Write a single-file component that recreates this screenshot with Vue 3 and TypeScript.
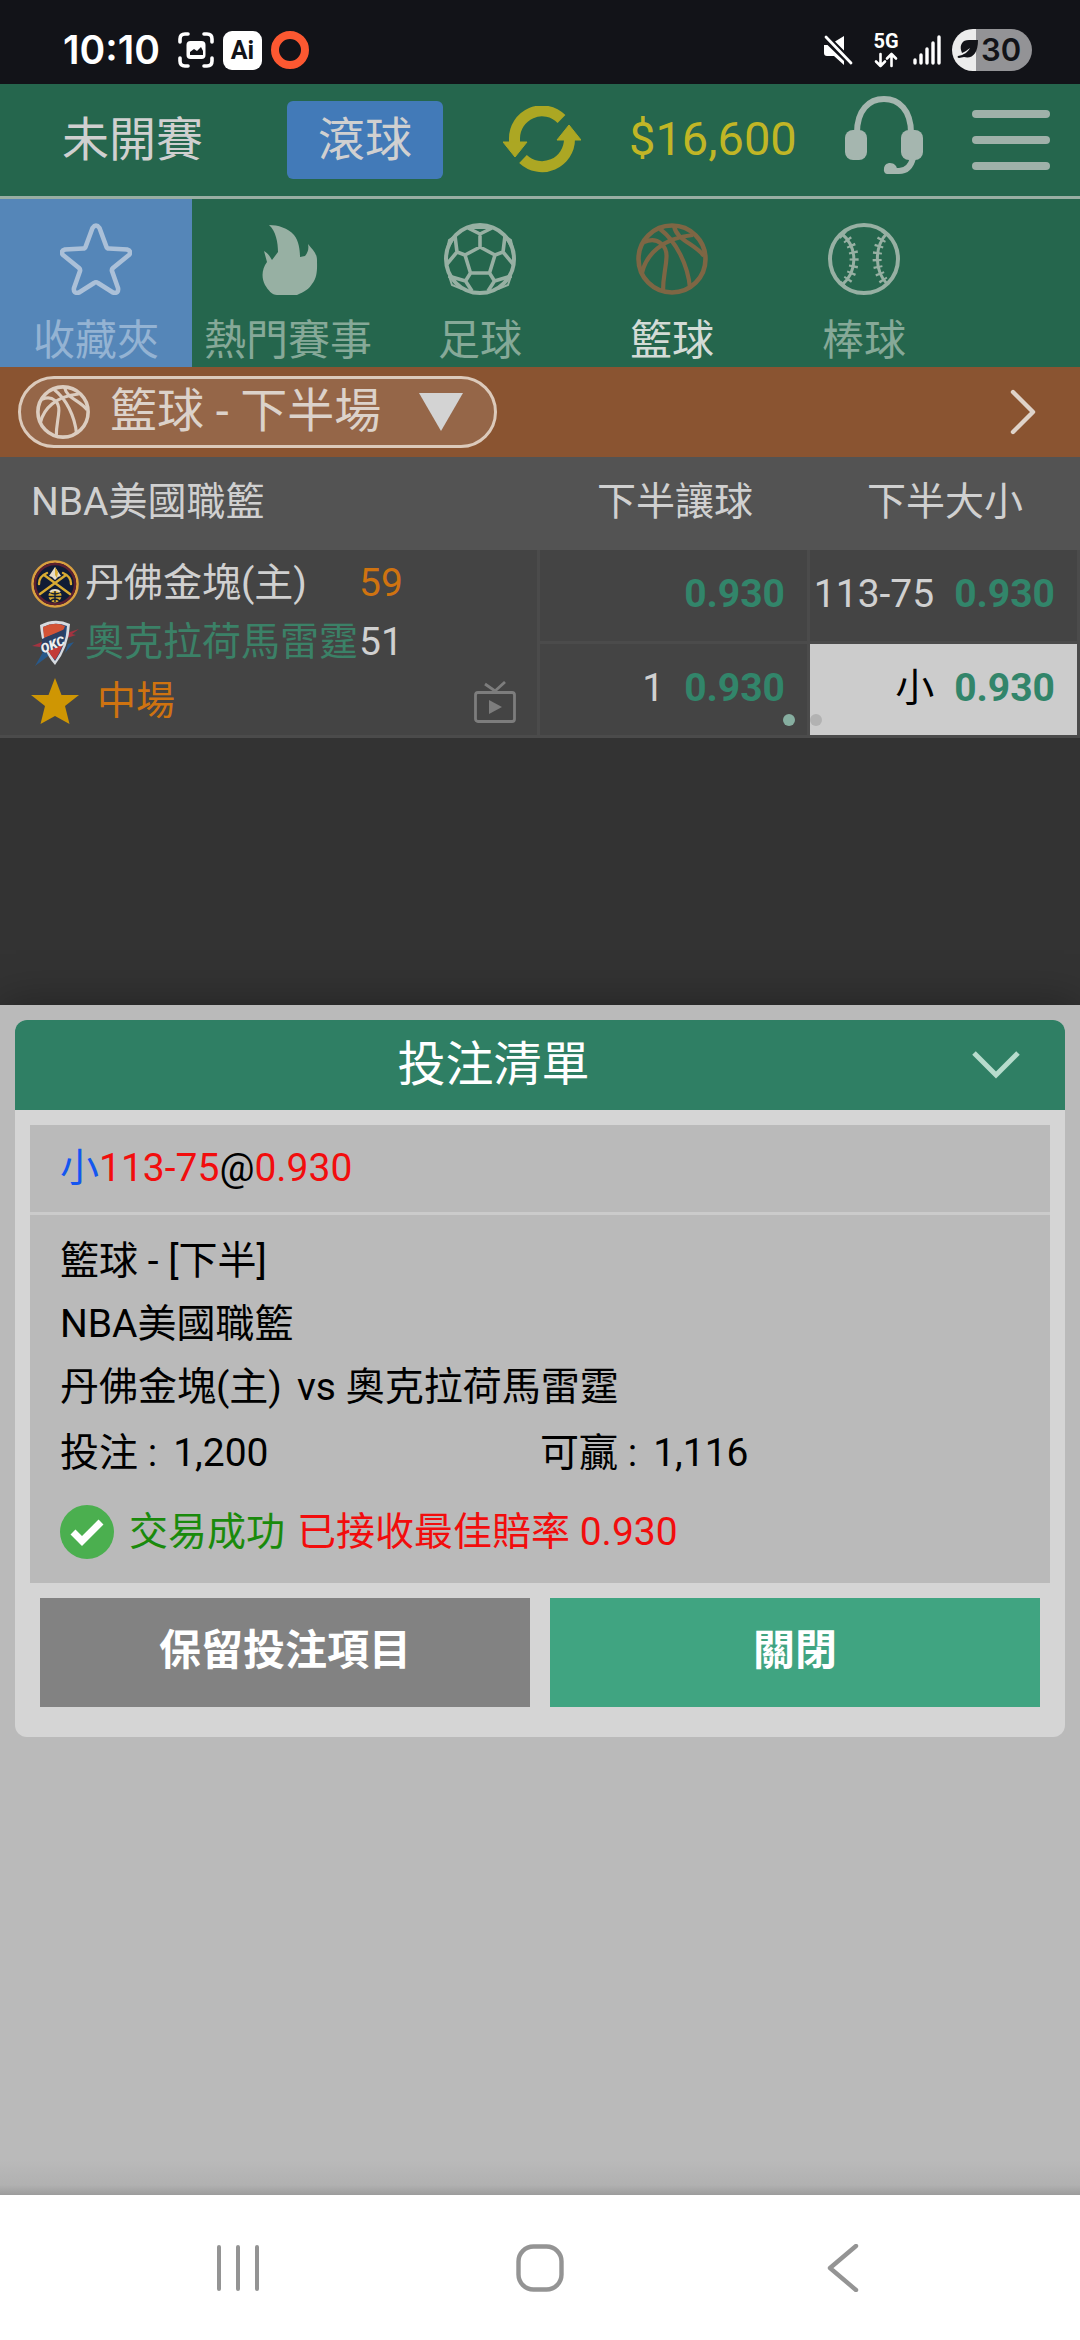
<script setup lang="ts">
import { ref } from 'vue'

interface Sport {
  id: string
  name: string
}

interface Odds {
  id: string
  line: string
  price: string
  picked?: boolean
  dot?: 'right' | 'left'
}

const sports: Sport[] = [
  { id: 'favourite', name: '收藏夾' },
  { id: 'hot', name: '熱門賽事' },
  { id: 'soccer', name: '足球' },
  { id: 'basketball', name: '籃球' },
  { id: 'baseball', name: '棒球' },
]

const homeOdds: Odds[] = [
  { id: 'h1', line: '', price: '0.930' },
  { id: 'o1', line: '113-75', price: '0.930' },
]

const awayOdds: Odds[] = [
  { id: 'h2', line: '1', price: '0.930', dot: 'right' },
  { id: 'o2', line: '小', price: '0.930', picked: true, dot: 'left' },
]

const period = ref('second')
</script>

<template>
  <div class="screen" lang="zh-Hant">
    <div class="status">
      <div class="status-side">
        <span class="clock">10:10</span>
        <svg class="shot" width="36" height="36" viewBox="0 0 36 36" fill="none">
          <path d="M2 10V7q0-5 5-5h3M26 2h3q5 0 5 5v3M34 26v3q0 5-5 5h-3M10 34H7q-5 0-5-5v-3" stroke="#fff" stroke-width="3.6" stroke-linecap="round" />
          <rect x="8.500" y="9" width="19" height="18" rx="4" fill="#fff" />
          <path d="M12 23v-3l4-3 3 2 4-4 2 4v4z" fill="#121318" />
        </svg>
        <span class="ai">Ai</span>
        <span class="ring"></span>
      </div>
      <div class="status-side">
        <svg class="mute" width="30" height="32" viewBox="0 0 30 32">
          <path d="M21 2v14.500L12 7.500zM1 11h3.500L21 27v4l-10-9H4q-3 0-3-3z" fill="#fff" />
          <path d="M3 3l25 26" stroke="#fff" stroke-width="2.800" stroke-linecap="round" />
        </svg>
        <div class="net">
          <span class="net-label">5G</span>
          <svg width="24" height="16" viewBox="0 0 24 16" fill="none" stroke="#fff" stroke-width="2.600" stroke-linecap="round" stroke-linejoin="round">
            <path d="M6.500 2v12M2 9.500l4.500 4.500L11 9.500M17.500 14V2M13 6.500L17.500 2 22 6.500" />
          </svg>
        </div>
        <svg class="signal" width="28" height="30" viewBox="0 0 28 30" stroke="#fff" stroke-width="3.400" stroke-linecap="round">
          <path d="M2 25v3M8 20v8M14 14v14M20 8v20M26 2v26" />
        </svg>
        <div class="battery">
          <svg width="22" height="22" viewBox="0 0 22 22">
            <path d="M21 1H12C5 1 3 6 4 11l1 3c3-1 5-3 8-5-2 4-6 7-12 8-1 1 0 2 1 2l5-1c8 2 14-3 14-17z" fill="#121318" />
          </svg>
          <span>30</span>
        </div>
      </div>
    </div>

    <header class="top">
      <a class="upcoming" href="#upcoming">未開賽</a>
      <button class="live" type="button">滾球</button>
      <button class="icon-btn" type="button" aria-label="刷新">
        <svg width="78" height="68" viewBox="0 0 78 68">
          <g fill="none" stroke="#aca723" stroke-width="11">
            <path d="M11.500 38V33A27.500 27.500 0 0 1 58.500 13" />
            <path d="M20 53A27.500 27.500 0 0 0 66.500 33" />
          </g>
          <path d="M0 36h24L12 51zM54 34h24L66 19z" fill="#aca723" stroke="#aca723" stroke-linejoin="round" />
        </svg>
      </button>
      <span class="balance">$16,600</span>
      <button class="icon-btn" type="button" aria-label="客服">
        <svg width="78" height="88" viewBox="0 0 78 88">
          <path d="M12 37C12 14 24 3 39 3s27 11 27 34M68 62c-2 8-6 13-14 13h-9" fill="none" stroke="#a5b6af" stroke-width="6" />
          <rect y="34" width="22" height="30" rx="8" fill="#a5b6af" />
          <rect x="56" y="34" width="22" height="30" rx="8" fill="#a5b6af" />
          <path d="M42 78a4 4 0 0 1-3-5c0-4 3-6 6-6 4 0 7 3 7 6v5z" fill="#a5b6af" />
        </svg>
      </button>
      <button class="icon-btn menu" type="button" aria-label="選單"><i></i><i></i><i></i></button>
    </header>

    <nav class="sports">
      <a v-for="s in sports" :key="s.id" :href="'#' + s.id" class="sport" :class="s.id">
        <svg width="72" height="72" viewBox="0 0 72 72" fill="none" stroke="currentColor">
          <path v-if="s.id === 'favourite'" d="M32.500 5Q36 0 39.500 5L46.500 24Q47 25.500 49 25.500L67 26.500Q72 28 69 32L53 45Q51.500 46.500 52 48L58 65Q59 71 53 69.500L38 60Q36 58.500 34 60L19 69.500Q13 71 14 65L20 48Q20.500 46.500 19 45L3 32Q0 28 5 26.500L23 25.500Q25 25.500 25.500 24Z" stroke-width="4.600" />
          <path v-else-if="s.id === 'hot'" d="M17 2C24 8 26 20 26 29L20 37C18 34 17 31 12 28L15 39C10 46 9 54 13 62C16 67 20 72 25 72H45C52 69 57 66 60 61C66 54 65 44 65 37C65 30 60 26 56 21C57 26 56 29 53 33L48 34C48 28 47 18 42 12C36 5 26 2 17 2Z" fill="currentColor" stroke="none" />
          <g v-else-if="s.id === 'soccer'">
            <circle cx="36" cy="36" r="34" stroke-width="4" />
            <path d="M36 24L51 32 45.500 50h-19L21 32zM36 24V11M24 5l12 6 12-6M51 32l8-3 2-16M59 29l10 12M45.500 50l5 8 17-5M50.500 58L44 68M26.500 50l-5 8-17-5M21.500 58L28 68M21 32l-8-3-2-16M13 29L3 41" stroke-width="3.600" stroke-linejoin="round" />
            <path d="M24 5l12 6 12-6zM61 13l8 14-2-10zM11 13L3 27l2-10zM54 66l13-13-3 9zM18 66L5 53l3 9z" stroke-width="2" />
          </g>
          <g v-else-if="s.id === 'basketball'" stroke-width="4.600">
            <circle cx="36" cy="36" r="33.500" />
            <path d="M8 19C23 13 31 24 30.500 34C30 46 27 52 27 69M6 50C10 32 26 15 57 12M24 6C40 18 52 42 54 65M38 3C41 18 58 20 68 33" stroke-width="4.200" />
          </g>
          <g v-else>
            <circle cx="36" cy="36" r="34" stroke-width="4" />
            <path d="M13 10C30 24 30 48 14 62M59 10C46 24 46 48 60 62" stroke-width="3" />
            <path d="M14 11C30 24 30 48 15 62M58 10C46 24 46 48 59 62" stroke-width="9" stroke-dasharray="2.200 4.800" />
          </g>
        </svg>
        <span>{{ s.name }}</span>
      </a>
    </nav>

    <div class="filter">
      <label class="pill">
        <svg width="54" height="54" viewBox="0 0 72 72" fill="none" stroke="#dccdc0" aria-hidden="true">
          <circle cx="36" cy="36" r="33.500" stroke-width="4.800" />
          <path d="M8 19C23 13 31 24 30.500 34C30 46 27 52 27 69M6 50C10 32 26 15 57 12M24 6C40 18 52 42 54 65M38 3C41 18 58 20 68 33" stroke-width="4.200" />
        </svg>
        <select v-model="period" aria-label="盤口">
          <option value="second">籃球 - 下半場</option>
        </select>
        <svg width="44" height="38" viewBox="0 0 44 38" aria-hidden="true"><path d="M0 0h44L22 38z" fill="#d3d3d3" /></svg>
      </label>
      <button class="icon-btn next" type="button" aria-label="下一頁">
        <svg width="26" height="46" viewBox="0 0 26 46" fill="none" stroke="#dfd3c9" stroke-width="4.400" stroke-linecap="round" stroke-linejoin="round"><path d="M3 3l20 20L3 43" /></svg>
      </button>
    </div>

    <table class="odds">
      <thead>
        <tr>
          <th class="league" scope="col">NBA美國職籃</th>
          <th scope="col">下半讓球</th>
          <th scope="col">下半大小</th>
        </tr>
      </thead>
      <tbody>
        <tr>
          <td class="match" rowspan="2">
            <div class="team">
              <svg width="48" height="48" viewBox="0 0 48 48">
                <circle cx="24" cy="24" r="22.500" fill="#101c35" stroke="#d99f3f" stroke-width="2.600" />
                <circle cx="24" cy="24" r="20" fill="none" stroke="#5d2030" stroke-width="2.400" />
                <path d="M9 34L35 15M39 34L13 15M8 24c0-5 3-9 8-11M40 24c0-5-3-9-8-11" fill="none" stroke="#d8ab32" stroke-width="2.400" stroke-linecap="round" />
                <path d="M24 7l6 9-3 1-3 3-3-3-3-1z" fill="#e5dccb" />
                <path d="M24 7l3 5-1 6-2-3z" fill="#d8ab32" />
                <circle cx="24" cy="36" r="6.500" fill="#d8ab32" />
                <path d="M18 32q6 4 12 0M17 36.500h14M24 30v12M19 41q5-4 10 0" fill="none" stroke="#101c35" stroke-width="1.400" />
                <path d="M19 32a7 7 0 0 1 10 0" fill="none" stroke="#e5dccb" stroke-width="2" />
              </svg>
              <span class="name">丹佛金塊(主)</span>
              <span class="score lead">59</span>
            </div>
            <div class="team">
              <svg width="48" height="48" viewBox="0 0 48 48">
                <path d="M36 14l12-4-7 5 4 1-12 4zM1 27l10-4-2 5z" fill="#a33340" />
                <path d="M12 33L4 47l12-9 4-4zM37 25l6-2-9 11z" fill="#28598a" />
                <path d="M9 6Q24-2 39 5Q38 28 24 46Q11 32 9 6z" fill="#d7dbe0" />
                <path d="M12 8Q24 2 36 7Q35 27 24 42Q14 30 12 8z" fill="#234a7c" />
                <path d="M12 8Q24 2 34 7L32 12 13 19z" fill="#d35336" />
                <path d="M17 32l15-7q-3 9-8 16-4-4-7-9z" fill="#c33b38" />
                <path d="M11 20l23-10-2 14-21 10z" fill="#2c3f63" />
                <text class="mark" x="9" y="30" transform="rotate(-22 22 25)">OKC</text>
              </svg>
              <span class="name away">奧克拉荷馬雷霆</span>
              <span class="score">51</span>
            </div>
            <div class="team state">
              <svg width="48" height="48" viewBox="0 0 48 48"><path d="M24 0l6.500 17H48L34 28l4.500 18L24 38 9.500 46 14 28 0 17h17.500z" fill="#cf9603" /></svg>
              <span class="half">中場</span>
              <svg class="tv" width="42" height="42" viewBox="0 0 42 42" fill="none" stroke="#7d7d7d" stroke-width="2.800">
                <rect x="1.500" y="11.500" width="39" height="29" rx="2.500" />
                <path d="M11 3l10 7L31 1" />
                <path d="M15 19l13 7-13 7z" fill="#7d7d7d" stroke="none" />
              </svg>
            </div>
          </td>
          <td v-for="o in homeOdds" :key="o.id">
            <button class="bet" type="button"><span>{{ o.line }}</span><b>{{ o.price }}</b></button>
          </td>
        </tr>
        <tr>
          <td v-for="o in awayOdds" :key="o.id">
            <button class="bet" :class="{ picked: o.picked }" type="button">
              <span>{{ o.line }}</span><b>{{ o.price }}</b>
              <i v-if="o.dot" class="dot" :class="o.dot"></i>
            </button>
          </td>
        </tr>
      </tbody>
    </table>

    <main class="sheet">
      <section class="slip">
        <div class="slip-head">
          <h1>投注清單</h1>
          <button class="icon-btn" type="button" aria-label="收合">
            <svg width="48" height="30" viewBox="0 0 48 30" fill="none" stroke="#b7dccd" stroke-width="5"><path d="M2 3l22 22L46 3" /></svg>
          </button>
        </div>
        <div class="ticket">
          <p class="pick"><span class="side">小</span><span class="red">113-75</span>@<span class="red">0.930</span></p>
          <div class="detail">
            <p>籃球 - [下半]</p>
            <p>NBA美國職籃</p>
            <p class="versus"><span>丹佛金塊(主)</span><span>vs 奧克拉荷馬雷霆</span></p>
            <div class="money">
              <p><span>投注 :</span><span>1,200</span></p>
              <p><span>可贏 :</span><span>1,116</span></p>
            </div>
            <p class="result">
              <svg width="54" height="54" viewBox="0 0 54 54"><circle cx="27" cy="27" r="27" fill="#4baf4f" /><path d="M13 27l9 9 19-19" fill="none" stroke="#fff" stroke-width="7" /></svg>
              <span class="ok">交易成功</span>
              <span class="red">已接收最佳賠率 0.930</span>
            </p>
          </div>
        </div>
        <div class="actions">
          <button type="button" class="keep">保留投注項目</button>
          <button type="button" class="close">關閉</button>
        </div>
      </section>
    </main>

    <nav class="system">
      <button class="icon-btn" type="button" aria-label="最近使用">
        <svg width="48" height="48" viewBox="0 0 48 48" stroke="#949494" stroke-width="4" stroke-linecap="round"><path d="M5 3v42M24 3v42M43 3v42" /></svg>
      </button>
      <button class="icon-btn" type="button" aria-label="主畫面">
        <svg width="48" height="48" viewBox="0 0 48 48" fill="none" stroke="#949494" stroke-width="4.400"><rect x="2.500" y="2.500" width="43" height="43" rx="15" /></svg>
      </button>
      <button class="icon-btn" type="button" aria-label="返回">
        <svg width="48" height="48" viewBox="0 0 48 48" fill="none" stroke="#949494" stroke-width="4.400" stroke-linecap="round" stroke-linejoin="round"><path d="M38 2L12 24l26 22" /></svg>
      </button>
    </nav>
  </div>
</template>

<style>
body {
  margin: 0;
  background: #333;
}
</style>

<style scoped>
.screen {
  min-height: 100vh;
  display: flex;
  flex-direction: column;
  background: #333;
  color: #d0d0d0;
  font-family: Roboto, "Noto Sans CJK TC", sans-serif;
  font-size: 39px;
  line-height: 60px;
}
.screen * {
  box-sizing: border-box;
}
svg {
  display: block;
  flex: none;
}
a {
  color: inherit;
  text-decoration: none;
}
button,
select {
  font: inherit;
  color: inherit;
  border: 0;
  border-radius: 0;
  padding: 0;
  margin: 0;
  background: none;
  white-space: nowrap;
}
p,
h1 {
  margin: 0;
  font-weight: 400;
}

/* status bar */
.status {
  height: 84px;
  padding: 16px 48px 0 63px;
  display: flex;
  justify-content: space-between;
  background: #121318;
  color: #fff;
  font-family: Inter, sans-serif;
}
.status-side {
  display: flex;
  align-items: center;
}
.clock {
  font-size: 39px;
  font-weight: 600;
}
.shot {
  margin: 0 9px 0 18px;
}
.ai {
  width: 39px;
  height: 39px;
  margin-right: 9px;
  border-radius: 9px;
  background: #fff;
  color: #121318;
  font-family: Roboto, sans-serif;
  font-size: 25px;
  line-height: 39px;
  font-weight: 700;
  text-align: center;
}
.ring {
  width: 38px;
  height: 38px;
  border: 8px solid #fc5831;
  border-radius: 50%;
}
.mute {
  margin-right: 20px;
}
.net {
  width: 26px;
  margin-right: 14px;
  display: flex;
  flex-direction: column;
  align-items: center;
  gap: 2px;
}
.net-label {
  font-family: Roboto, sans-serif;
  font-size: 20px;
  line-height: 18px;
  font-weight: 700;
}
.signal {
  margin-right: 11px;
}
.battery {
  width: 80px;
  height: 42px;
  padding-left: 5px;
  border-radius: 21px;
  display: flex;
  align-items: center;
  gap: 2px;
  background: linear-gradient(90deg, #ececec 24px, #939396 24px);
  color: #121318;
  font-size: 31px;
  line-height: 42px;
  font-weight: 600;
}

/* header */
.top {
  height: 115px;
  display: grid;
  grid-template-columns: 287fr 216fr 126fr 216fr 127fr 108fr;
  align-items: center;
  justify-items: start;
  border-bottom: 3px solid #98aea3;
  background: #25664d;
  font-size: 47px;
  white-space: nowrap;
}
.upcoming {
  padding-left: 62px;
}
.live {
  width: 156px;
  height: 78px;
  border-radius: 6px;
  background: #427ab8;
}
.balance {
  padding-bottom: 3px;
  color: #c1b626;
}
.icon-btn {
  display: flex;
  align-items: center;
  justify-content: center;
}
.menu {
  flex-direction: column;
  gap: 18px;
}
.menu i {
  width: 78px;
  height: 8px;
  border-radius: 4px;
  background: #9fb1a9;
}

/* sport tabs */
.sports {
  height: 168px;
  display: flex;
  background: #25664d;
}
.sport {
  width: 192px;
  padding-top: 24px;
  display: flex;
  flex-direction: column;
  align-items: center;
  gap: 16px;
  color: #86a998;
  font-size: 42px;
  white-space: nowrap;
}
.sport svg {
  color: #97b0a3;
}
.favourite {
  background: #5586b8;
  color: #94b3d3;
}
.favourite svg {
  color: #abc0d8;
}
.basketball {
  color: #d3dbd6;
}
.basketball svg {
  color: #7e6644;
}

/* period filter */
.filter {
  height: 90px;
  padding: 0 44px 0 18px;
  display: flex;
  align-items: center;
  justify-content: space-between;
  background: #8a5431;
}
.pill {
  width: 479px;
  height: 72px;
  padding: 0 31px 0 15px;
  display: flex;
  align-items: center;
  gap: 20px;
  border: 3px solid #dccabb;
  border-radius: 36px;
  background: #956648;
}
.pill select {
  flex: 1;
  min-width: 0;
  height: 60px;
  padding-bottom: 3px;
  appearance: none;
  outline: none;
  color: #dcd2ca;
  font-size: 47px;
  line-height: 57px;
}

/* odds table */
.odds {
  width: 100%;
  margin-bottom: 267px;
  border-spacing: 0;
  table-layout: fixed;
  background: #4b4b4b;
}
.odds th {
  width: 25%;
  height: 93px;
  padding: 0 0 3px;
  background: #535353;
  font-weight: 400;
  text-align: center;
}
.odds .league {
  width: 50%;
  padding-left: 31px;
  text-align: left;
}
.odds td {
  height: 94px;
  padding: 0 3px 3px 0;
}
.match {
  background: #444;
  background-clip: content-box;
}
.team {
  height: 59px;
  padding-left: 31px;
  display: flex;
  align-items: center;
  line-height: 59px;
  white-space: nowrap;
}
.name {
  width: 274px;
  margin-left: 6px;
}
.away {
  color: #3b8167;
}
.lead,
.half {
  color: #cf7310;
}
.half {
  margin-left: 18px;
}
.tv {
  margin: 0 21px 0 auto;
}
.mark {
  fill: #eee;
  font-family: Roboto, sans-serif;
  font-size: 13px;
  font-style: italic;
  font-weight: 900;
}
.bet {
  position: relative;
  width: 100%;
  height: 91px;
  padding: 0 22px 3px 0;
  display: flex;
  align-items: center;
  justify-content: flex-end;
  gap: 20px;
  background: #444;
}
.bet b {
  color: #32856a;
  font-weight: 700;
}
.bet.picked {
  background: #ccc;
  color: #000;
}
.dot {
  position: absolute;
  bottom: 9px;
  width: 12px;
  height: 12px;
  border-radius: 50%;
}
.dot.right {
  right: 12px;
  background: #86aea0;
}
.dot.left {
  left: 0;
  background: #b2b2b2;
}

/* bet slip */
.sheet {
  position: relative;
  flex: 1;
  padding: 15px;
  background: linear-gradient(0deg, #9c9c9c, #b1b1b1 10px, #bababa 36px);
  box-shadow: 0 0 45px rgba(0, 0, 0, 0.35);
  color: #000;
}
.slip {
  border-radius: 12px;
  overflow: hidden;
  background: #d5d5d5;
}
.slip-head {
  height: 90px;
  padding-right: 45px;
  display: flex;
  align-items: center;
  background: #2f7f64;
  color: #fff;
}
.slip-head h1 {
  flex: 1;
  font-size: 48px;
  line-height: 90px;
  text-align: center;
}
.ticket {
  margin: 15px 15px 0;
  background: #bababa;
}
.pick {
  height: 90px;
  padding: 0 30px;
  border-bottom: 3px solid #cbcbcb;
  line-height: 87px;
}
.side {
  color: #1456f0;
}
.red {
  color: #f20d0d;
}
.ok {
  margin-left: 3px;
  color: #1a8a0c;
}
.detail {
  padding: 15px 30px 24px;
  line-height: 63px;
}
.versus {
  display: flex;
  gap: 15px;
}
.money {
  padding: 3px 0;
  display: grid;
  grid-template-columns: 1fr 1fr;
}
.money p {
  display: flex;
  gap: 16px;
}
.result {
  margin-top: 17px;
  display: flex;
  align-items: center;
  gap: 12px;
  line-height: 54px;
}
.actions {
  padding: 15px 25px 30px;
  display: grid;
  grid-template-columns: 1fr 1fr;
  gap: 20px;
}
.actions button {
  height: 109px;
  padding-bottom: 3px;
  color: #fff;
  font-size: 42px;
  font-weight: 700;
}
.actions .keep {
  background: #828282;
}
.actions .close {
  background: #40a481;
}

/* system navigation */
.system {
  position: relative;
  height: 145px;
  padding: 0 87px;
  display: grid;
  grid-template-columns: 1fr 1fr 1fr;
  background: #fff;
}
</style>
